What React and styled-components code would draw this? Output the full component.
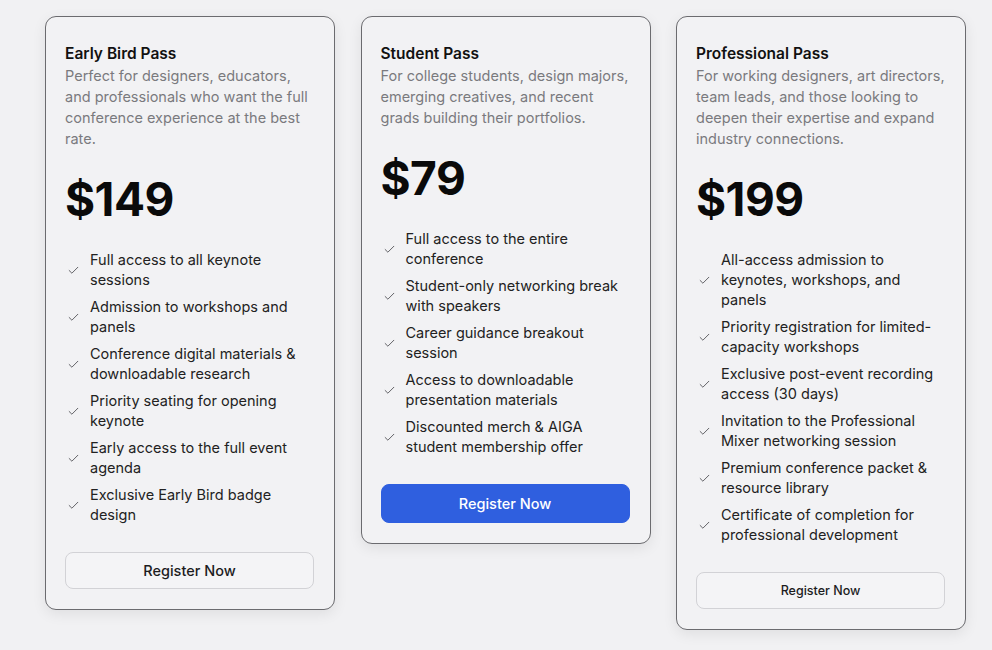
import React from "react";
import styled, { createGlobalStyle } from "styled-components";
import { Check } from "lucide-react";

const GlobalStyle = createGlobalStyle`
  html, body {
    margin: 0;
    padding: 0;
    background: #f1f1f3;
    font-family: Inter, "Noto Sans", sans-serif;
  }
`;

const passes = [
  {
    name: "Early Bird Pass",
    text: "Perfect for designers, educators, and professionals who want the full conference experience at the best rate.",
    price: "$149",
    features: [
      "Full access to all keynote sessions",
      "Admission to workshops and panels",
      "Conference digital materials & downloadable research",
      "Priority seating for opening keynote",
      "Early access to the full event agenda",
      "Exclusive Early Bird badge design",
    ],
    variant: "outline",
  },
  {
    name: "Student Pass",
    text: "For college students, design majors, emerging creatives, and recent grads building their portfolios.",
    price: "$79",
    features: [
      "Full access to the entire conference",
      "Student-only networking break with speakers",
      "Career guidance breakout session",
      "Access to downloadable presentation materials",
      "Discounted merch & AIGA student membership offer",
    ],
    variant: "primary",
  },
  {
    name: "Professional Pass",
    text: "For working designers, art directors, team leads, and those looking to deepen their expertise and expand industry connections.",
    price: "$199",
    features: [
      "All-access admission to keynotes, workshops, and panels",
      "Priority registration for limited-capacity workshops",
      "Exclusive post-event recording access (30 days)",
      "Invitation to the Professional Mixer networking session",
      "Premium conference packet & resource library",
      "Certificate of completion for professional development",
    ],
    variant: "small",
  },
];

function App() {
  return (
    <>
      <GlobalStyle />
      <Page>
        {passes.map((p) => (
          <Card key={p.name}>
            <Title>{p.name}</Title>
            <Description>{p.text}</Description>
            <Price>{p.price}</Price>
            <FeatureList>
              {p.features.map((f) => (
                <Feature key={f}>
                  <CheckIcon>
                    <Check size={13} strokeWidth={1.8} />
                  </CheckIcon>
                  <span>{f}</span>
                </Feature>
              ))}
            </FeatureList>
            <RegisterBtn $variant={p.variant}>Register Now</RegisterBtn>
          </Card>
        ))}
      </Page>
    </>
  );
}

export default App;

const Page = styled.div`
  display: flex;
  align-items: flex-start;
  gap: 25.5px;
  padding: 16px 0 0 45px;
  min-height: 650px;
  box-sizing: border-box;
`;

const Card = styled.div`
  box-sizing: border-box;
  width: 290px;
  display: flex;
  flex-direction: column;
  padding: 27px 20px 20px 19px;
  background: #f2f2f4;
  border: 1px solid #6b6b6f;
  border-radius: 11px;
  box-shadow: 0 4px 14px rgba(0, 0, 0, 0.08);
`;

const Title = styled.div`
  font-size: 15.5px;
  font-weight: 600;
  line-height: 20px;
  color: #111;
`;

const Description = styled.div`
  margin-top: 1px;
  font-size: 14.5px;
  line-height: 21px;
  color: #7a7a7e;
`;

const Price = styled.div`
  margin-top: 27px;
  font-size: 46px;
  font-weight: 700;
  line-height: 46px;
  letter-spacing: -0.5px;
  color: #0a0a0a;
`;

const FeatureList = styled.ul`
  list-style: none;
  margin: 28px 0 0;
  padding: 0 0 0 2px;
  display: flex;
  flex-direction: column;
  gap: 7px;
`;

const Feature = styled.li`
  display: flex;
  align-items: center;
  gap: 10px;
  font-size: 14.5px;
  line-height: 20px;
  color: #222;
`;

const CheckIcon = styled.span`
  display: flex;
  flex: none;
  color: #5f5f63;
`;

const RegisterBtn = styled.button`
  margin-top: 27px;
  height: ${(p) => (p.$variant === "primary" ? "39px" : "37px")};
  border-radius: 8px;
  font-family: Inter, "Noto Sans", sans-serif;
  font-size: ${(p) => (p.$variant === "small" ? "12.5px" : "14.5px")};
  font-weight: 500;
  cursor: pointer;
  color: ${(p) => (p.$variant === "primary" ? "#fff" : "#1c1c1e")};
  background: ${(p) => (p.$variant === "primary" ? "#2f5fdf" : "#f4f4f6")};
  border: 1px solid ${(p) => (p.$variant === "primary" ? "#2f5fdf" : "#d2d2d6")};
`;
